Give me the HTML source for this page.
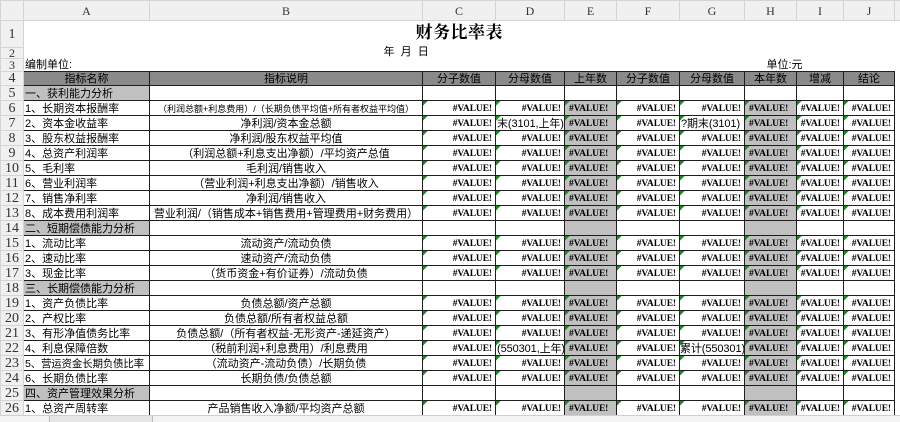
<!DOCTYPE html>
<html><head><meta charset="utf-8"><style>
*{margin:0;padding:0;box-sizing:border-box}
body{width:900px;height:422px;overflow:hidden;background:#fff;font-family:"Liberation Sans","Noto Sans CJK SC",sans-serif;position:relative}
table{position:absolute;left:0;top:0;width:900px;border-collapse:collapse;table-layout:fixed}
td{font-size:11px;line-height:12px;white-space:nowrap;overflow:hidden;padding:0 1px;vertical-align:bottom;color:#000}
td.rh{background:#f0f0f0;border:1px solid #d4d4d4;text-align:center;font-family:"Liberation Serif",serif;font-size:14px;color:#333;line-height:13px;vertical-align:middle;padding:0}
tr.ch td{background:#f0f0f0;border:1px solid #d4d4d4;text-align:center;font-family:"Liberation Serif",serif;font-size:12px;color:#333;vertical-align:middle}
tr.g td:not(.rh){border:1px solid #1e1e1e}
tr.h td:not(.rh){background:#8a8a8a;text-align:center}
td.s{background:#c0c0c0}
td.c{text-align:center}
td.v{text-align:right;font-family:"Liberation Serif",serif;font-weight:bold;font-size:9.5px;letter-spacing:-0.1px;padding-right:3px;background-image:linear-gradient(135deg,#1c8a1c 3px,transparent 3.5px);background-repeat:no-repeat;background-size:6px 6px}
td.x{background-color:#c0c0c0;text-align:left;padding-left:4px}
td.e{background:#c0c0c0}
</style></head><body>
<table>
<colgroup><col style="width:23px"><col style="width:126px"><col style="width:273px"><col style="width:73px"><col style="width:69px"><col style="width:52px"><col style="width:63px"><col style="width:65px"><col style="width:52px"><col style="width:47px"><col style="width:51px"><col style="width:6px"></colgroup>
<tr class="ch" style="height:20px"><td style="background:#f0f0f0"></td><td>A</td><td>B</td><td>C</td><td>D</td><td>E</td><td>F</td><td>G</td><td>H</td><td>I</td><td>J</td><td></td></tr>
<tr style="height:27px"><td class="rh">1</td><td></td><td></td><td style="overflow:visible;position:relative"><span style="position:absolute;left:-7px;top:6px;font-family:'Liberation Serif','Noto Serif CJK SC',serif;font-weight:bold;font-size:17px;letter-spacing:0.5px;white-space:nowrap">财务比率表</span></td><td></td><td></td><td></td><td></td><td></td><td></td><td></td><td></td></tr>
<tr style="height:11px"><td class="rh" style="font-size:12px;line-height:10px">2</td><td></td><td style="overflow:visible;position:relative"><span style="position:absolute;left:234px;top:-2px;font-size:11px">年&nbsp;&nbsp;月&nbsp;&nbsp;日</span></td><td></td><td></td><td></td><td></td><td></td><td></td><td></td><td></td><td></td></tr>
<tr style="height:13px"><td class="rh" style="font-size:12px;line-height:11px">3</td><td style="overflow:visible">编制单位:</td><td></td><td></td><td></td><td></td><td></td><td></td><td></td><td style="overflow:visible;position:relative"><span style="position:absolute;left:-30px;bottom:0">单位:元</span></td><td></td><td></td></tr>
<tr class="g h" style="height:14px"><td class="rh">4</td><td>指标名称</td><td>指标说明</td><td>分子数值</td><td>分母数值</td><td>上年数</td><td>分子数值</td><td>分母数值</td><td>本年数</td><td>增减</td><td>结论</td><td style="border:none;background:#fff"></td></tr>
<tr class="g" style="height:15px"><td class="rh">5</td><td class="s">一、获利能力分析</td><td></td><td></td><td></td><td></td><td></td><td></td><td></td><td></td><td></td><td style="border:none"></td></tr>
<tr class="g" style="height:15px"><td class="rh">6</td><td>1、长期资本报酬率</td><td class="c" style="font-size:9px">（利润总额+利息费用）/（长期负债平均值+所有者权益平均值）</td><td class="v">#VALUE!</td><td class="v">#VALUE!</td><td class="v x">#VALUE!</td><td class="v">#VALUE!</td><td class="v">#VALUE!</td><td class="v x">#VALUE!</td><td class="v">#VALUE!</td><td class="v">#VALUE!</td><td style="border:none"></td></tr>
<tr class="g" style="height:15px"><td class="rh">7</td><td>2、资本金收益率</td><td class="c">净利润/资本金总额</td><td class="v">#VALUE!</td><td class="v" style="font-family:'Liberation Sans','Noto Sans CJK SC',sans-serif;font-weight:normal;font-size:11px;padding-right:1px">末(3101,上年)</td><td class="v x">#VALUE!</td><td class="v">#VALUE!</td><td class="v" style="font-family:'Liberation Sans','Noto Sans CJK SC',sans-serif;font-weight:normal;font-size:11px;text-align:left;padding-left:1px">?期末(3101)</td><td class="v x">#VALUE!</td><td class="v">#VALUE!</td><td class="v">#VALUE!</td><td style="border:none"></td></tr>
<tr class="g" style="height:15px"><td class="rh">8</td><td>3、股东权益报酬率</td><td class="c">净利润/股东权益平均值</td><td class="v">#VALUE!</td><td class="v">#VALUE!</td><td class="v x">#VALUE!</td><td class="v">#VALUE!</td><td class="v">#VALUE!</td><td class="v x">#VALUE!</td><td class="v">#VALUE!</td><td class="v">#VALUE!</td><td style="border:none"></td></tr>
<tr class="g" style="height:15px"><td class="rh">9</td><td>4、总资产利润率</td><td class="c">（利润总额+利息支出净额）/平均资产总值</td><td class="v">#VALUE!</td><td class="v">#VALUE!</td><td class="v x">#VALUE!</td><td class="v">#VALUE!</td><td class="v">#VALUE!</td><td class="v x">#VALUE!</td><td class="v">#VALUE!</td><td class="v">#VALUE!</td><td style="border:none"></td></tr>
<tr class="g" style="height:15px"><td class="rh">10</td><td>5、毛利率</td><td class="c">毛利润/销售收入</td><td class="v">#VALUE!</td><td class="v">#VALUE!</td><td class="v x">#VALUE!</td><td class="v">#VALUE!</td><td class="v">#VALUE!</td><td class="v x">#VALUE!</td><td class="v">#VALUE!</td><td class="v">#VALUE!</td><td style="border:none"></td></tr>
<tr class="g" style="height:15px"><td class="rh">11</td><td>6、营业利润率</td><td class="c">（营业利润+利息支出净额）/销售收入</td><td class="v">#VALUE!</td><td class="v">#VALUE!</td><td class="v x">#VALUE!</td><td class="v">#VALUE!</td><td class="v">#VALUE!</td><td class="v x">#VALUE!</td><td class="v">#VALUE!</td><td class="v">#VALUE!</td><td style="border:none"></td></tr>
<tr class="g" style="height:15px"><td class="rh">12</td><td>7、销售净利率</td><td class="c">净利润/销售收入</td><td class="v">#VALUE!</td><td class="v">#VALUE!</td><td class="v x">#VALUE!</td><td class="v">#VALUE!</td><td class="v">#VALUE!</td><td class="v x">#VALUE!</td><td class="v">#VALUE!</td><td class="v">#VALUE!</td><td style="border:none"></td></tr>
<tr class="g" style="height:15px"><td class="rh">13</td><td>8、成本费用利润率</td><td class="c">营业利润/（销售成本+销售费用+管理费用+财务费用）</td><td class="v">#VALUE!</td><td class="v">#VALUE!</td><td class="v x">#VALUE!</td><td class="v">#VALUE!</td><td class="v">#VALUE!</td><td class="v x">#VALUE!</td><td class="v">#VALUE!</td><td class="v">#VALUE!</td><td style="border:none"></td></tr>
<tr class="g" style="height:15px"><td class="rh">14</td><td class="s">二、短期偿债能力分析</td><td></td><td></td><td></td><td class="e"></td><td></td><td></td><td class="e"></td><td></td><td></td><td style="border:none"></td></tr>
<tr class="g" style="height:15px"><td class="rh">15</td><td>1、流动比率</td><td class="c">流动资产/流动负债</td><td class="v">#VALUE!</td><td class="v">#VALUE!</td><td class="v x">#VALUE!</td><td class="v">#VALUE!</td><td class="v">#VALUE!</td><td class="v x">#VALUE!</td><td class="v">#VALUE!</td><td class="v">#VALUE!</td><td style="border:none"></td></tr>
<tr class="g" style="height:15px"><td class="rh">16</td><td>2、速动比率</td><td class="c">速动资产/流动负债</td><td class="v">#VALUE!</td><td class="v">#VALUE!</td><td class="v x">#VALUE!</td><td class="v">#VALUE!</td><td class="v">#VALUE!</td><td class="v x">#VALUE!</td><td class="v">#VALUE!</td><td class="v">#VALUE!</td><td style="border:none"></td></tr>
<tr class="g" style="height:15px"><td class="rh">17</td><td>3、现金比率</td><td class="c">（货币资金+有价证券）/流动负债</td><td class="v">#VALUE!</td><td class="v">#VALUE!</td><td class="v x">#VALUE!</td><td class="v">#VALUE!</td><td class="v">#VALUE!</td><td class="v x">#VALUE!</td><td class="v">#VALUE!</td><td class="v">#VALUE!</td><td style="border:none"></td></tr>
<tr class="g" style="height:15px"><td class="rh">18</td><td class="s">三、长期偿债能力分析</td><td></td><td></td><td></td><td class="e"></td><td></td><td></td><td class="e"></td><td></td><td></td><td style="border:none"></td></tr>
<tr class="g" style="height:15px"><td class="rh">19</td><td>1、资产负债比率</td><td class="c">负债总额/资产总额</td><td class="v">#VALUE!</td><td class="v">#VALUE!</td><td class="v x">#VALUE!</td><td class="v">#VALUE!</td><td class="v">#VALUE!</td><td class="v x">#VALUE!</td><td class="v">#VALUE!</td><td class="v">#VALUE!</td><td style="border:none"></td></tr>
<tr class="g" style="height:15px"><td class="rh">20</td><td>2、产权比率</td><td class="c">负债总额/所有者权益总额</td><td class="v">#VALUE!</td><td class="v">#VALUE!</td><td class="v x">#VALUE!</td><td class="v">#VALUE!</td><td class="v">#VALUE!</td><td class="v x">#VALUE!</td><td class="v">#VALUE!</td><td class="v">#VALUE!</td><td style="border:none"></td></tr>
<tr class="g" style="height:15px"><td class="rh">21</td><td>3、有形净值债务比率</td><td class="c">负债总额/（所有者权益-无形资产-递延资产）</td><td class="v">#VALUE!</td><td class="v">#VALUE!</td><td class="v x">#VALUE!</td><td class="v">#VALUE!</td><td class="v">#VALUE!</td><td class="v x">#VALUE!</td><td class="v">#VALUE!</td><td class="v">#VALUE!</td><td style="border:none"></td></tr>
<tr class="g" style="height:15px"><td class="rh">22</td><td>4、利息保障倍数</td><td class="c">（税前利润+利息费用）/利息费用</td><td class="v">#VALUE!</td><td class="v" style="font-family:'Liberation Sans','Noto Sans CJK SC',sans-serif;font-weight:normal;font-size:11px;padding-right:1px">(550301,上年)</td><td class="v x">#VALUE!</td><td class="v">#VALUE!</td><td class="v" style="font-family:'Liberation Sans','Noto Sans CJK SC',sans-serif;font-weight:normal;font-size:11px;text-align:left;padding-left:0">累计(550301)</td><td class="v x">#VALUE!</td><td class="v">#VALUE!</td><td class="v">#VALUE!</td><td style="border:none"></td></tr>
<tr class="g" style="height:15px"><td class="rh">23</td><td style="font-size:10.5px;letter-spacing:-0.2px">5、营运资金长期负债比率</td><td class="c">（流动资产-流动负债）/长期负债</td><td class="v">#VALUE!</td><td class="v">#VALUE!</td><td class="v x">#VALUE!</td><td class="v">#VALUE!</td><td class="v">#VALUE!</td><td class="v x">#VALUE!</td><td class="v">#VALUE!</td><td class="v">#VALUE!</td><td style="border:none"></td></tr>
<tr class="g" style="height:15px"><td class="rh">24</td><td>6、长期负债比率</td><td class="c">长期负债/负债总额</td><td class="v">#VALUE!</td><td class="v">#VALUE!</td><td class="v x">#VALUE!</td><td class="v">#VALUE!</td><td class="v">#VALUE!</td><td class="v x">#VALUE!</td><td class="v">#VALUE!</td><td class="v">#VALUE!</td><td style="border:none"></td></tr>
<tr class="g" style="height:15px"><td class="rh">25</td><td class="s">四、资产管理效果分析</td><td></td><td></td><td></td><td class="e"></td><td></td><td></td><td class="e"></td><td></td><td></td><td style="border:none"></td></tr>
<tr class="g" style="height:15px"><td class="rh">26</td><td>1、总资产周转率</td><td class="c">产品销售收入净额/平均资产总额</td><td class="v">#VALUE!</td><td class="v">#VALUE!</td><td class="v x">#VALUE!</td><td class="v">#VALUE!</td><td class="v">#VALUE!</td><td class="v x">#VALUE!</td><td class="v">#VALUE!</td><td class="v">#VALUE!</td><td style="border:none"></td></tr>
</table>
<div style="position:absolute;left:0;top:415px;width:900px;height:7px;background:#e6e6e6;border-top:1px solid #cfcfcf"></div>
<div style="position:absolute;left:0;top:416px;width:50px;height:6px;background:#f3f3f3;border-right:1px solid #bbb"></div>
<div style="position:absolute;left:152px;top:416px;width:748px;height:6px;background:#f3f3f3;border-left:1px solid #bbb"></div>
</body></html>
